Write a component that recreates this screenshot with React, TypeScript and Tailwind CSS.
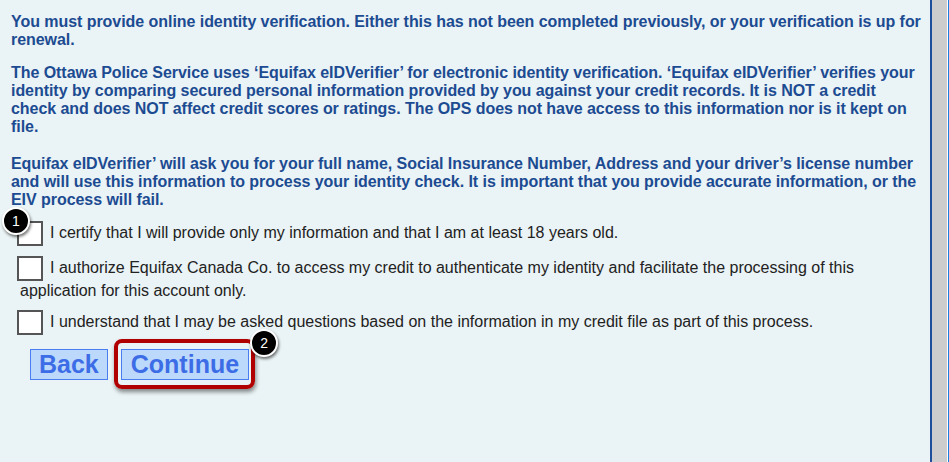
import React from 'react';

const paras = [
  'You must provide online identity verification. Either this has not been completed previously, or your verification is up for renewal.',
  'The Ottawa Police Service uses \u2018Equifax eIDVerifier\u2019 for electronic identity verification. \u2018Equifax eIDVerifier\u2019 verifies your identity by comparing secured personal information provided by you against your credit records. It is NOT a credit check and does NOT affect credit scores or ratings. The OPS does not have access to this information nor is it kept on file.',
  'Equifax eIDVerifier\u2019 will ask you for your full name, Social Insurance Number, Address and your driver\u2019s license number and will use this information to process your identity check. It is important that you provide accurate information, or the EIV process will fail.',
];

const checks = [
  'I certify that I will provide only my information and that I am at least 18 years old.',
  'I authorize Equifax Canada Co. to access my credit to authenticate my identity and facilitate the processing of this application for this account only.',
  'I understand that I may be asked questions based on the information in my credit file as part of this process.',
];

function Badge({ n }: { n: number }) {
  return (
    <span className="flex h-[28px] w-[28px] items-center justify-center rounded-full border-2 border-white bg-black text-[14px] leading-none text-white shadow-[1px_2px_3px_rgba(0,0,0,0.55)]">
      {n}
    </span>
  );
}

export default function App() {
  return (
    <div className="flex h-[462px] w-[949px] bg-[#eaf3f5] font-['Liberation_Sans',Arial,sans-serif]">
      <div className="flex-1 border-r-2 border-[#1f4e9c] pl-[11px] pr-[7px] pt-[13px]">
        <div className="text-[16px] font-bold leading-[18px] tracking-[-0.05px] text-[#1c4b92]">
          <p>{paras[0]}</p>
          <p className="mt-[15px]">{paras[1]}</p>
          <p className="mt-[19px]">{paras[2]}</p>
        </div>

        <div className="mt-[12px] space-y-[10px] pl-[9px] text-[16px] leading-[19px] text-[#222]">
          {checks.map((c, i) => (
            <div key={c} className="relative">
              {i === 0 && (
                <span className="absolute -left-[18px] -top-[14px]">
                  <Badge n={1} />
                </span>
              )}
              <span className="-ml-[3px] mr-[7px] inline-block h-[25px] w-[26px] border-2 border-[#555] bg-white align-middle" />
              {c}
            </div>
          ))}
        </div>

        <div className="mt-[14px] flex items-center gap-[13px] pl-[19px]">
          <button className="h-[31px] border border-[#4a7ef0] bg-[#bcd9fb] px-[8px] text-[25px] font-bold leading-none text-[#3d6de6]">
            Back
          </button>
          <div className="relative">
            <button className="block h-[31px] border border-[#4a7ef0] bg-[#bcd9fb] px-[9px] text-[25px] font-bold leading-none text-[#3d6de6]">
              Continue
            </button>
            <span className="pointer-events-none absolute -bottom-[9px] -left-[7px] -right-[6px] -top-[10px] rounded-[8px] border-[4px] border-[#b00000] shadow-[1px_3px_4px_rgba(0,0,0,0.45)]" />
            <span className="absolute -right-[29px] -top-[20px]">
              <Badge n={2} />
            </span>
          </div>
        </div>
      </div>
      <div className="flex w-[17px]">
        <div className="flex-1 bg-[#cdcdcd]" />
        <div className="w-px bg-white" />
        <div className="w-px bg-[#1a7fe0]" />
      </div>
    </div>
  );
}
